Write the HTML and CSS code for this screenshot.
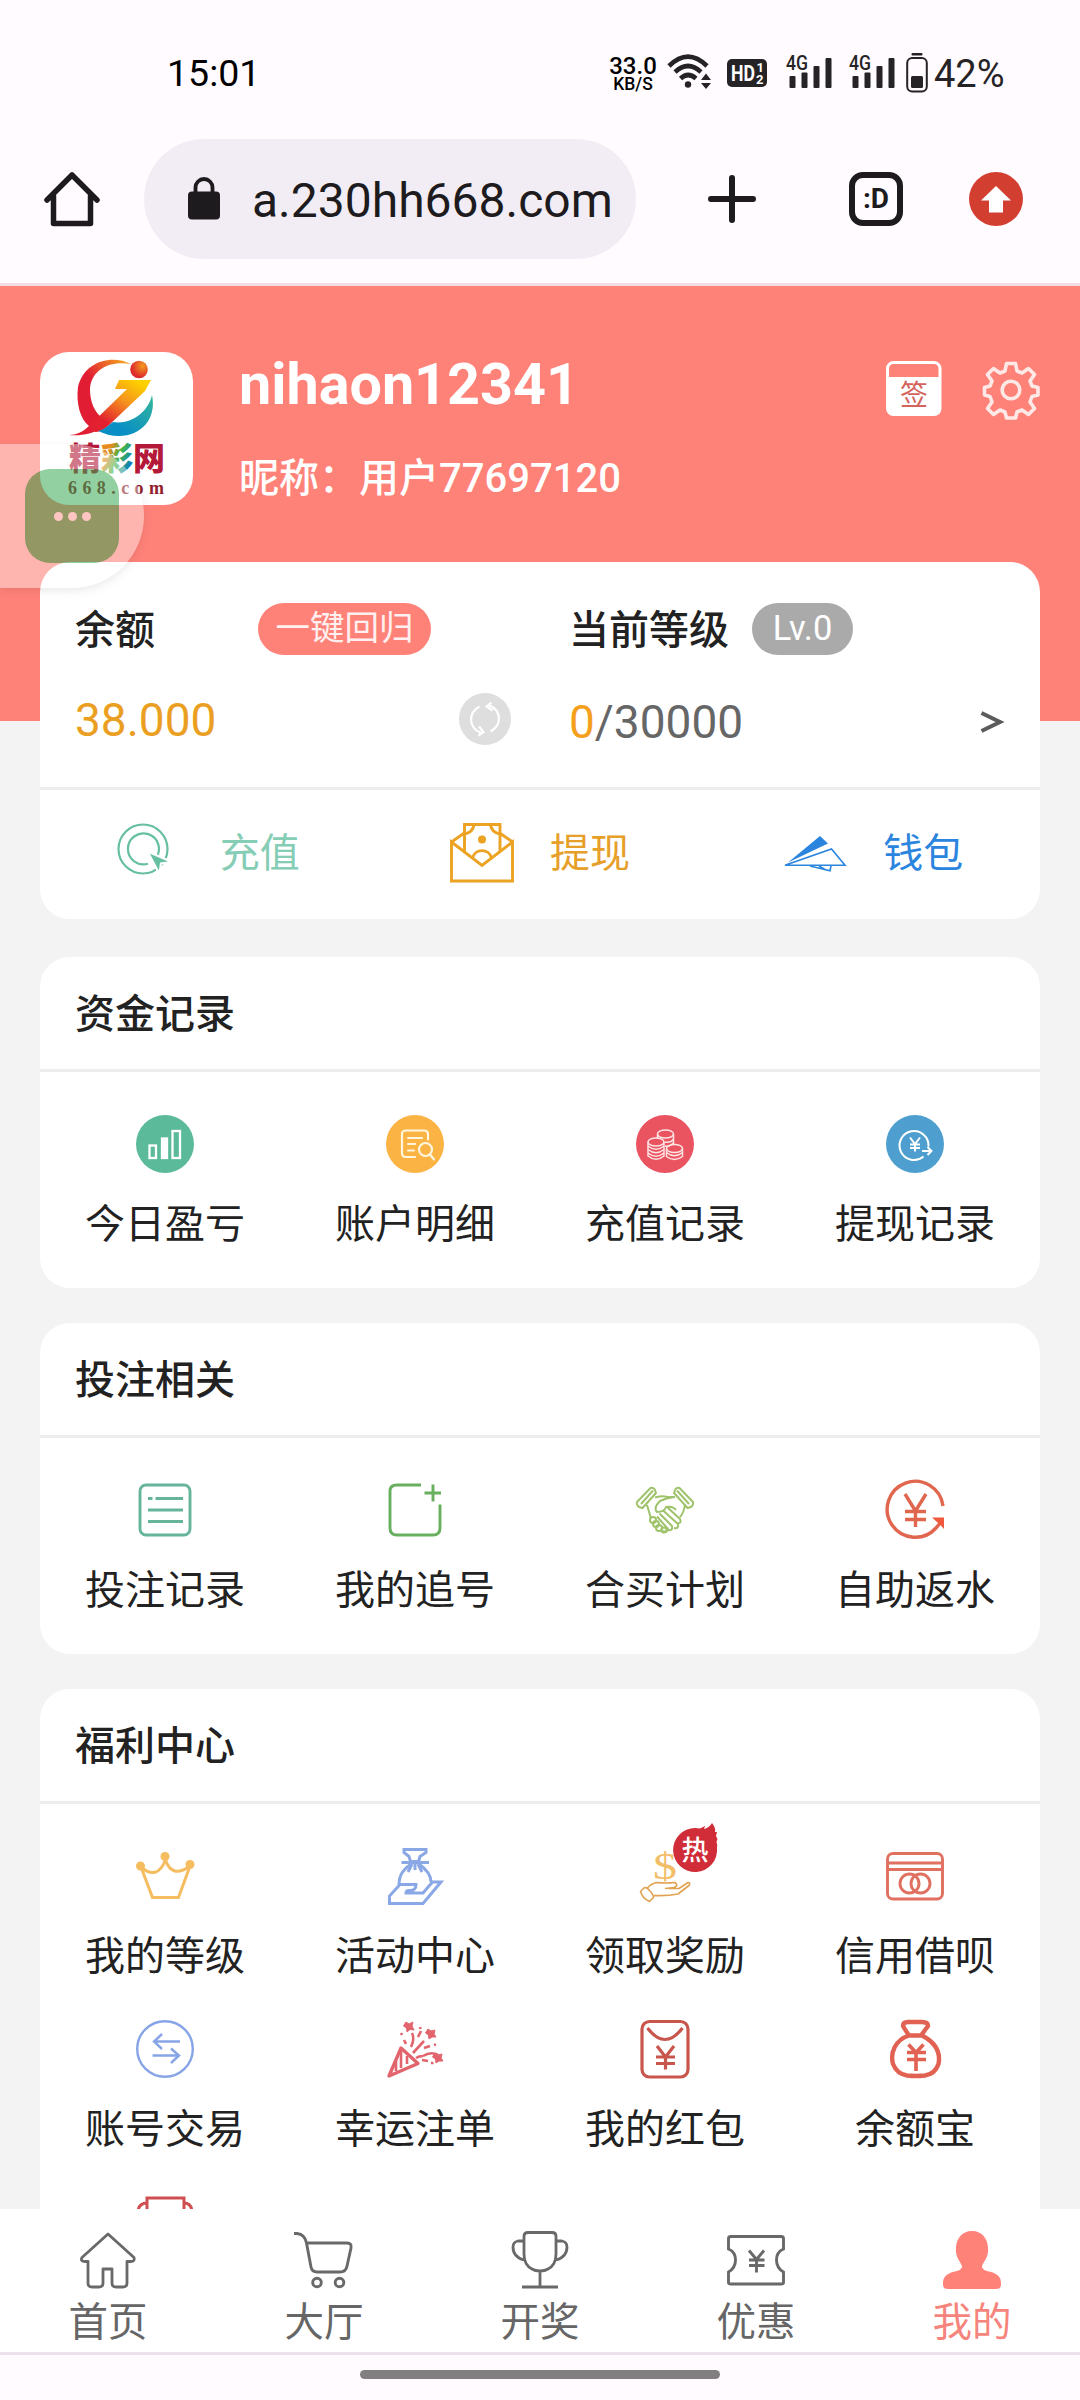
FILE: index.html
```html
<!DOCTYPE html>
<html lang="zh-CN">
<head>
<meta charset="utf-8">
<title>我的</title>
<link rel="stylesheet" href="styles.css">
</head>
<body>
<div class="screen">
  <div class="status">
    <span class="clock">15:01</span>
    <div class="status-right">
      <div class="speed"><span class="speed-num">33.0</span><span class="speed-unit">KB/S</span></div>
      <svg class="wifi" width="46" height="36" viewBox="0 0 46 36" fill="none" stroke="#252325" stroke-width="4.600">
        <path d="M2 12Q21 -7 40 12M8 18Q21 6 34 18M13.500 24.500Q21 17.500 29 24.500"/>
        <circle cx="21" cy="30.500" r="3.200" fill="#252325" stroke="none"/>
        <path d="M34 26l5-6.500 5 6.500zM34 29l5 6 5-6z" fill="#252325" stroke="none"/>
      </svg>
      <svg class="hd" width="40" height="28" viewBox="0 0 40 28">
        <rect width="40" height="28" rx="5" fill="#252325"/>
        <text x="4" y="21.500" class="hd-text" textLength="24" lengthAdjust="spacingAndGlyphs">HD</text>
        <text x="29.500" y="12.500" class="hd-num">1</text>
        <text x="29" y="25" class="hd-num">2</text>
      </svg>
      <svg class="signal" width="46" height="34" viewBox="0 0 46 34" fill="#252325">
        <text x="0" y="15" class="net" textLength="22" lengthAdjust="spacingAndGlyphs">4G</text>
        <rect x="3.500" y="21" width="6" height="12" rx="1"/><rect x="15.500" y="17.500" width="6" height="15.500" rx="1"/><rect x="27.500" y="11" width="6" height="22" rx="1"/><rect x="39.500" y="3" width="6" height="30" rx="1"/>
      </svg>
      <svg class="signal" width="46" height="34" viewBox="0 0 46 34" fill="#252325">
        <text x="0" y="15" class="net" textLength="22" lengthAdjust="spacingAndGlyphs">4G</text>
        <rect x="3.500" y="21" width="6" height="12" rx="1"/><rect x="15.500" y="17.500" width="6" height="15.500" rx="1"/><rect x="27.500" y="11" width="6" height="22" rx="1"/><rect x="39.500" y="3" width="6" height="30" rx="1"/>
      </svg>
      <svg class="battery" width="22" height="40" viewBox="0 0 22 40">
        <rect x="5.500" y="0" width="11" height="2.500" rx="1" fill="#252325"/>
        <rect x="1.200" y="5" width="19.600" height="33.500" rx="5" fill="none" stroke="#252325" stroke-width="2"/>
        <rect x="5" y="23" width="12" height="12" rx="1.500" fill="#252325"/>
      </svg>
      <span class="percent">42%</span>
    </div>
  </div>
  <div class="toolbar">
    <svg class="home" width="58" height="58" viewBox="0 0 58 58" fill="none" stroke="#1d1b1e" stroke-width="5.500" stroke-linejoin="round" stroke-linecap="round"><path d="M4 30L29 5l25 25M10.500 26v27.500h37V26"/></svg>
    <div class="address">
      <svg width="34" height="43" viewBox="0 0 34 43"><rect x="1" y="14.500" width="32" height="28" rx="4" fill="#1d1b1e"/><path d="M8.500 17v-6.500a8.500 8.500 0 0 1 17 0V17" fill="none" stroke="#1d1b1e" stroke-width="3.800"/></svg>
      <span class="url">a.230hh668.com</span>
    </div>
    <svg class="plus" width="48" height="48" viewBox="0 0 48 48" stroke="#1d1b1e" stroke-width="6" stroke-linecap="round"><path d="M24 3v42M3 24h42"/></svg>
    <span class="tabs">:D</span>
    <svg class="update" width="54" height="54" viewBox="0 0 54 54"><circle cx="27" cy="27" r="27" fill="#d23f31"/><path d="M27 14L12 28.500h8V40.500h14V28.500h8z" fill="#fff"/></svg>
  </div>

  <div class="page">
    <header class="profile">
      <svg class="avatar" width="153" height="153" viewBox="0 0 153 153">
        <defs>
          <linearGradient id="swoosh" x1="0" y1="1" x2="1" y2="0"><stop offset=".55" stop-color="#e11d34"/><stop offset="1" stop-color="#f7b41a"/></linearGradient>
          <linearGradient id="seven" x1="0" y1="1" x2=".75" y2="0"><stop offset=".25" stop-color="#e2202f"/><stop offset=".65" stop-color="#f5921e"/><stop offset="1" stop-color="#fdd000"/></linearGradient>
          <linearGradient id="wave" x1="0" y1="1" x2="1" y2="0"><stop offset=".3" stop-color="#0a8fc4"/><stop offset="1" stop-color="#35b79a"/></linearGradient>
          <radialGradient id="ball" cx=".7" cy=".3" r=".8"><stop offset="0" stop-color="#f39a1e"/><stop offset=".8" stop-color="#dd2a2c"/></radialGradient>
          <linearGradient id="cai" x1="0" y1="0" x2="1" y2=".5"><stop offset=".3" stop-color="#e78b1e"/><stop offset=".62" stop-color="#45b649"/><stop offset="1" stop-color="#0c7fc0"/></linearGradient>
        </defs>
        <rect width="153" height="153" fill="#fff"/>
        <path d="M91 12C72 2 44 9 38 35c-2 16 2 32 11 39-6 6-13 9-20 9 12 1 24-1 32-7l3-9C54 61 50 49 50 37 51 19 68 8 91 12z" fill="url(#swoosh)"/>
        <path d="M79 28h32l-6 11L68 74c-5 4-9 6-13 6L49 74l38-37H75z" fill="url(#seven)"/>
        <path d="M58 79c8-2 10-6 15-9 17 3 35-9 39-27 5 24-11 41-33 41-8 0-14-2-21-5z" fill="url(#wave)"/>
        <circle cx="99" cy="17.500" r="8.800" fill="url(#ball)"/>
        <text x="29" y="118" class="logo-cn" fill="#b5193a">精</text><text x="61" y="118" class="logo-cn" fill="url(#cai)">彩</text><text x="93" y="118" class="logo-cn" fill="#b5193a">网</text>
        <text x="28" y="141.500" class="logo-en" textLength="96">668.com</text>
      </svg>
      <div class="who">
        <div class="name">nihaon12341</div>
        <div class="nick">昵称：用户77697120</div>
      </div>
      <div class="tools">
        <svg width="56" height="56" viewBox="0 0 56 56"><rect x="1.500" y="1.500" width="52.500" height="52" rx="6" fill="none" stroke="#fff" stroke-width="3"/><path d="M1 16h54v32q0 6-6 6H7q-6 0-6-6z" fill="#fff"/><text x="14" y="44" class="sign">签</text></svg>
        <svg width="58" height="58" viewBox="0 0 58 58" fill="none" stroke="#ffe9e7" stroke-width="3.600" stroke-linejoin="round"><circle cx="29" cy="29" r="8.800"/><path d="M24.500 2.500h9l1.500 7.500 5 2 6.500-4.500 6 6-4.500 6.500 2 5 6 1.500v7.500l-6 1.500-2 5.500 4.500 6.500-6 6-6.500-4.500-5 2-1.500 6h-9l-1.500-6-5-2-6.500 4.500-6-6L10 41l-2-5.500L2.500 34v-7.500L8 25l2-5-4.500-6.500 6-6L18 12l5-2z"/></svg>
      </div>
    </header>

    <main class="cards">
      <section class="card">
        <div class="summary">
          <div class="half">
            <div class="line"><span class="caption">余额</span><span class="pill recall">一键回归</span></div>
            <div class="line amounts"><span class="money">38.000</span>
              <svg class="refresh" width="52" height="52" viewBox="0 0 52 52" fill="none" stroke="#fff" stroke-width="2.200"><circle cx="26" cy="26" r="26" fill="#dedede" stroke="none"/><path d="M20.500 13.500C9 20 9 34 22 40M31.500 38.500C43 32 43 18 30 12M32.500 9.500L27.500 13.500l6 4M19.500 42.500l5-3.500-4.500-5.500"/></svg>
            </div>
          </div>
          <div class="half level">
            <div class="line"><span class="caption">当前等级</span><span class="pill lv">Lv.0</span></div>
            <div class="line amounts"><span class="points"><b>0</b>/30000</span>
              <svg class="more" width="24" height="24" viewBox="0 0 24 24" fill="none" stroke="#5c5c5c" stroke-width="4"><path d="M1.500 3L20 12 1.500 21"/></svg>
            </div>
          </div>
        </div>
        <div class="quick">
          <div class="action mint">
            <svg width="70" height="62" viewBox="0 0 70 62" fill="none" stroke="#67bfa2" stroke-width="2.200"><circle cx="29" cy="27" r="24.500"/><path d="M42 36A15.500 15.500 0 1 0 34 41.700"/><path d="M33.500 29.500L58 40l-11 1.500L45.500 52z" fill="#67bfa2" stroke="#fff"/></svg>
            <span>充值</span>
          </div>
          <div class="action amber">
            <svg width="64" height="62" viewBox="1 0 64 62" fill="none" stroke="#eca223" stroke-width="2.900"><path d="M2.500 20v39h61V20L33 43.500z"/><path d="M2.500 20L16 10.500M63.500 20L50 10.500M15.500 29V2.500h35.500V29M25 2.500q-1 8-9.500 9.500M41.500 2.500q1 8 9.500 9.500M23.500 36a9.800 9.800 0 0 1 19 0"/><circle cx="33" cy="17.500" r="4" fill="#eca223" stroke="none"/></svg>
            <span>提现</span>
          </div>
          <div class="action azure">
            <svg width="64" height="40" viewBox="0 0 64 40" fill="none" stroke="#2b85df" stroke-width="1.600"><path d="M37 3l8 7.500L5 29.500z" fill="#2b85df" stroke="none"/><path d="M2 32.300L48.500 16 62 32.300zM27 33l20 4.700 1-4.700M36 33l6 3.500"/></svg>
            <span>钱包</span>
          </div>
        </div>
      </section>

      <section class="card">
        <h2>资金记录</h2>
        <div class="grid">
          <div class="item"><svg class="ico" viewBox="0 0 58 58"><circle cx="29" cy="29" r="29" fill="#5bba99"/><g fill="none" stroke="#fff" stroke-width="2.300"><rect x="13.500" y="30.500" width="6.500" height="12.500"/><rect x="26" y="23.500" width="5" height="19.500" fill="#fff"/><rect x="36.500" y="16" width="7.500" height="27"/></g></svg><span>今日盈亏</span></div>
          <div class="item"><svg class="ico" viewBox="0 0 58 58"><circle cx="29" cy="29" r="29" fill="#fbb343"/><g fill="none" stroke="#fff6df" stroke-width="2.200" stroke-linecap="round"><path d="M29 42H20q-4 0-4-4V19q0-3.500 4-3.500h18q4 0 4 4v5M22 23h14M22 29h7M22 35.500h6"/><circle cx="39.500" cy="34.500" r="6.500"/><path d="M44 39.500l4 5"/></g></svg><span>账户明细</span></div>
          <div class="item"><svg class="ico" viewBox="0 0 58 58"><circle cx="29" cy="29" r="29" fill="#e95460"/><g fill="none" stroke="#ffe4e4" stroke-width="1.500"><ellipse cx="29.500" cy="19" rx="8" ry="4"/><path d="M21.500 19v5M37.500 19v11M29 27q6 1 8.500-3M29 31q5 1 8.500-3"/><ellipse cx="20" cy="27" rx="8" ry="4"/><path d="M12 27v14q8 6.500 16 0V27M12 31q8 6.500 16 0M12 34.500q8 6.500 16 0M12 38q8 6.500 16 0"/><ellipse cx="38.500" cy="33.500" rx="8" ry="4"/><path d="M30.500 33.500v8q8 6 16 0v-8M30.500 37.500q8 6.500 16 0"/></g></svg><span>充值记录</span></div>
          <div class="item"><svg class="ico" viewBox="0 0 58 58"><circle cx="29" cy="29" r="29" fill="#4e9fcf"/><g fill="none" stroke="#fff" stroke-width="2"><path d="M37.500 41.500A14.500 14.500 0 1 1 42.500 31.500M24 22.500l5 6.500 5-6.500M29 29v7.500M24 29.500h10M24 33h10M36 36h9M41.500 32l4 4-4 4"/></g></svg><span>提现记录</span></div>
        </div>
      </section>

      <section class="card">
        <h2>投注相关</h2>
        <div class="grid">
          <div class="item"><svg class="ico" viewBox="0 0 58 58" fill="none" stroke="#67b49d" stroke-width="2.900"><rect x="4" y="4" width="50" height="50" rx="6"/><path d="M12 17.500h4.500M19.500 17.500H47M12 29h35M12 40.500h35"/></svg><span>投注记录</span></div>
          <div class="item"><svg class="ico" viewBox="0 0 58 58" fill="none" stroke="#68af60" stroke-width="2.900"><path d="M35 4H11Q4 4 4 10v37q0 7 7 7h36q7 0 7-7V23.500M47 3.500v17M38.500 12H55"/></svg><span>我的追号</span></div>
          <div class="item"><svg class="ico" viewBox="0 0 58 58" fill="none" stroke="#9fc36a" stroke-width="2" stroke-linejoin="round"><path d="M1 21L14.500 7q2-1 4 1l1.500 4L6.500 27Q0 26 1 21zM5 23L17 9.500M57 21L43.500 7q-2-1-4 1L38 12l13.500 15Q58 26 57 21zM53 23L41 9.500M19 16.500q8-2 12-.5h8M11 24l4 13.500M49 23q-1 9-5 13M38 16q-8 1-14 4c-4 4-6 8-3 11 5 0 8-2 9-5 5-1 8 0 10 3M31 26l13 12q2 5-3 4M26.500 29L42 43q1 5-4 4M23.500 32.500L36 45q1 5-4 4M21 35.500L32 48q-1 4-5 2"/><circle cx="17" cy="39" r="3"/><circle cx="20" cy="43" r="3"/><circle cx="23" cy="47" r="3"/><circle cx="28" cy="49" r="2.500"/></svg><span>合买计划</span></div>
          <div class="item"><svg class="ico" viewBox="0 0 58 58" fill="none" stroke="#e1664e" stroke-width="3.400"><path d="M57 25A28 28 0 1 0 50 47L56 40M19 13l10.500 17L40 13M29.500 28v18M19 30.500h21M19 38.500h21"/><path d="M46 36.500h12V48L54 43.500 51 41z" fill="#f0593b" stroke="none"/></svg><span>自助返水</span></div>
        </div>
      </section>

      <section class="card welfare">
        <h2>福利中心</h2>
        <div class="grid">
          <div class="item"><svg class="ico" viewBox="0 0 58 58" fill="none" stroke="#f6bd60" stroke-width="3"><path d="M5 20l11.500 30.500h26L54 19Q36 32 29.500 13 21 34 5 20z"/><g fill="#f6bd60" stroke="none"><circle cx="4.500" cy="19" r="4.500"/><circle cx="29" cy="9.500" r="4.500"/><circle cx="54" cy="17.500" r="4.500"/></g></svg><span>我的等级</span></div>
          <div class="item"><svg class="ico" viewBox="0 0 58 58" fill="none" stroke="#8aa8e6" stroke-width="3"><path d="M18 2.500h22v3l-6 4-1.500 5h-8L23 9.500l-5-4zM15.500 15.500H43M25 17c-7 5-12 10-12 21M33 17c7 5 12 10 12 18M29 16v7M26 17l-4 8M32 17l4 8"/><path d="M3.500 56.500V49L14 37.500h16q0 6-6 6-4-.5-4 2.500h17l9.500-11H55L37 56.500z"/></svg><span>活动中心</span></div>
          <div class="item"><div class="ico-wrap"><svg class="ico" viewBox="0 0 58 58"><text x="17" y="32" class="dollar" textLength="24" lengthAdjust="spacingAndGlyphs">$</text><path d="M4.500 44.500l4-4q3 0 5 3 4 4 4 7l-4 4q-7-3-9-10zM11 41.500q4-5 10-6 8 1 18 0 4 3-1 5l-9 1M33 41.500h10l9-6q3 0 1 3L42 47q-10 2-24 1.500" fill="none" stroke="#e2a350" stroke-width="1.600" stroke-linejoin="round"/></svg>
            <svg class="hot" width="46" height="50" viewBox="0 0 46 50"><path d="M23 5Q26 5 28 5.500L33 3l-1 3q5-1 8-6 4 5 3 9l2 0-1 4 1.500 3-1 3q1 2 .5 6A22 22 0 1 1 23 5z" fill="#d02d39"/><text x="9.500" y="37" class="hot-text">热</text></svg></div><span>领取奖励</span></div>
          <div class="item"><svg class="ico" viewBox="0 0 58 58" fill="none" stroke="#e07060" stroke-width="2.900"><rect x="1.500" y="6.500" width="55" height="45.500" rx="5.500"/><path d="M1.500 16h55M1.500 22.500h55"/><circle cx="23.500" cy="36.500" r="9.500"/><circle cx="34.500" cy="36.500" r="9.500"/></svg><span>信用借呗</span></div>
          <div class="item"><svg class="ico" viewBox="0 0 58 58" fill="none" stroke="#87a5e6" stroke-width="2.400"><circle cx="29" cy="29" r="27.800"/><path d="M44 21.500H18M26 14l-8 7.500 8 7.500M16.500 35.500H43M35 28.500l8 7-8 7.500"/></svg><span>账号交易</span></div>
          <div class="item"><svg class="ico" viewBox="0 0 58 58" fill="none" stroke="#e2656d" stroke-width="2.600" stroke-linejoin="round"><path d="M15 28L3 56l29-12.500z" stroke-width="3.400"/><path d="M15 31v17M21 36v8M10 41v10" /><path d="M26 13q3 6-1 14M38 21L27 33M35 11l-3 6M37 36q-4 0-7 2M37 36q8-5 15-1M38 28l6-2M36 40l6 1M15 13l1 2M18 20l2 4M34 7l.5 2M48 25l2-.5M45 43h2.500"/><path d="M20 2l3 2 4-2-1 4 2 4-4-.5-3 2.500-.500-4-3-2zM42 9l3 2 4-1-1 4 2 3-4 0-3 2-.500-4-3-2zM49 33l3 2 4-1-1 4 2 3-4 0-3 2-.500-4-3-2z" fill="#e2656d" stroke="#e2656d" stroke-width="1"/></svg><span>幸运注单</span></div>
          <div class="item"><svg class="ico" viewBox="0 0 58 58" fill="none" stroke="#c9564d" stroke-width="3.200"><rect x="6" y="1.500" width="46" height="55.500" rx="7.500"/><path d="M11.500 8Q29 31 46.500 8M21 26l8.500 11 8.500-11M29.500 36v13.500M20 37h19M20 43.500h19"/></svg><span>我的红包</span></div>
          <div class="item"><svg class="ico" viewBox="0 0 58 58" fill="none" stroke="#e16252" stroke-width="4.400"><path d="M23 15.500q-4-6-6-9.500 0-4 5-4h14q6 0 6 4-3 4-7 9.500zM23 15.500C9 20 4 33 7 44q4 10 14 11.500 9 1 18 0Q49 54 52.500 44 56 26 36 15.500z"/><path d="M22.500 24.500l7.500 8 7.500-8M30 31.500V51M21 32.500h19M21 39.500h19" stroke-width="3.600"/></svg><span>余额宝</span></div>
          <div class="item"><svg class="ico" viewBox="0 0 58 58" fill="none" stroke="#cf4f50" stroke-width="3"><path d="M11 5h37v24q0 14-18.500 14T11 29zM11 10Q2 10 2 20q0 8 9 10M48 10q8 0 8 10 0 8-8 10"/></svg></div>
        </div>
      </section>
    </main>
  </div>

  <nav class="tabbar">
    <div class="tab"><svg class="ico" viewBox="0 0 58 58" fill="none" stroke="#696969" stroke-width="2.800" stroke-linejoin="round"><path d="M29 3L3 26.500q-2 4 3 4h3V52q0 4 4 4h7q4 0 4-4V38h9v14q0 4 4 4h7q4 0 4-4V30.500h4q4 0 3-4z"/></svg><span>首页</span></div>
    <div class="tab"><svg class="ico" viewBox="0 0 58 58" fill="none" stroke="#696969" stroke-width="2.900" stroke-linejoin="round"><path d="M-1 2.500h3q8 1 9.500 9.500L16 36q1 5 6 5h23q6 0 7-6l4-18q1-5-4-5H12"/><circle cx="22" cy="51.500" r="4.300"/><circle cx="44.500" cy="51.500" r="4.300"/></svg><span>大厅</span></div>
    <div class="tab"><svg class="ico" viewBox="0 0 58 58" fill="none" stroke="#696969" stroke-width="2.800"><path d="M13 5q0-3.500 4-3.500h24q4 0 4 3.500v18q0 11-8 15-3 2-8 2t-8-2q-8-4-8-15zM13 10H7q-5 1-5 6 0 10 11 13M45 10h6q5 1 5 6 0 10-11 13M29 40v16M11 56h36"/></svg><span>开奖</span></div>
    <div class="tab"><svg class="ico" viewBox="0 0 58 58" fill="none" stroke="#696969" stroke-width="2.900"><path d="M4 5.500h50q2.500 0 2.500 2V18q-7 3-7 11t7 12v10.500q0 1.500-2.500 1.500H4q-2.500 0-2.500-1.500V41q7-4 7-12t-7-11V7.500q0-2 2.500-2zM22 19.500l7.500 9 7.500-9M29.500 28v13.500M22 29h15.500M22 34.500h15.500"/></svg><span>优惠</span></div>
    <div class="tab active"><svg class="ico" viewBox="0 0 58 58"><path d="M29 0c11 0 17 9 16 21-1 7-4 9-6 14 0 5 7 5 12 7 6 3 7 6 7 11 0 4-2 5-5 5H5c-3 0-5-1-5-5 0-5 1-8 7-11 5-2 12-2 12-7-2-5-5-7-6-14C12 9 18 0 29 0z" fill="#ff8279"/></svg><span>我的</span></div>
  </nav>
  <div class="gesture"><i></i></div>

  <div class="float"><div class="chat"><i></i><i></i><i></i></div></div>
</div>
</body>
</html>
```
FILE: styles.css
```css
* { box-sizing: border-box; }
body { margin: 0; font-family: Roboto, "Noto Sans CJK SC", sans-serif; color: #222; }
svg { display: block; flex: none; overflow: visible; }
.screen { position: relative; width: 1080px; height: 2400px; overflow: hidden; display: flex; flex-direction: column; background: #fffbff; }

.status { height: 139px; flex: none; display: flex; justify-content: space-between; padding: 45px 73px 0 167px; }
.clock { font-size: 37.500px; line-height: 57px; color: #000; }
.status-right { display: flex; align-items: center; height: 56px; }
.speed { display: flex; flex-direction: column; width: 52px; align-items: center; color: #000; font-weight: 500; margin-right: 8px; }
.speed-num { font-size: 24px; line-height: 20px; height: 20px; }
.speed-unit { font-size: 17.500px; line-height: 17px; height: 15px; }
.wifi { margin: -2px 14px 0 0; }
.hd { margin-right: 19px; }
.hd-text { font-size: 22px; font-weight: 700; fill: #fff; }
.hd-num { font-size: 13px; font-weight: 700; fill: #fff; }
.net { font-size: 20px; font-weight: 500; }
.signal { margin: -2px 17px 0 0; }
.signal + .battery { margin-left: -6px; }
.battery { margin-right: 6px; }
.percent { font-size: 38px; color: #252325; width: 73px; padding-top: 2px; }

.toolbar { height: 147px; flex: none; display: flex; align-items: flex-start; border-bottom: 3px solid #f2dce6; padding: 0 57px 0 43px; }
.home, .plus, .tabs, .update { margin-top: 33px; }
.home { margin-top: 31px; }
.address { display: flex; align-items: center; width: 492px; height: 120px; margin-left: 43px; border-radius: 60px; background: #f2edf4; padding-left: 43px; }
.address svg { margin-top: -2px; }
.url { margin-left: 31px; padding-top: 2px; font-size: 48px; color: #1d1b1e; }
.plus { margin: 36px 93px 0 72px; }
.tabs { width: 54px; height: 54px; border: 6px solid #1d1b1e; border-radius: 14px; text-align: center; font-size: 28px; font-weight: 700; line-height: 41px; color: #1d1b1e; margin-right: 66px; }

.page { height: 1923px; flex: none; overflow: hidden; background: linear-gradient(#ff8279 435px, #f3f3f3 435px); }
.profile { height: 434px; background: #ff8279; display: flex; padding: 66px 40px 0; }
.avatar { border-radius: 29px; overflow: hidden; }
.logo-cn { font-size: 32px; font-weight: 900; }
.logo-en { font: bold 18px "Liberation Serif", serif; fill: #8f1d2c; }
.who { margin-left: 46px; flex: 1; color: #fff; }
.name { font-size: 57.500px; font-weight: 700; line-height: 66px; }
.nick { font-size: 40px; font-weight: 500; line-height: 60px; margin-top: 31px; }
.tools { display: flex; gap: 40px; margin-top: 9px; }
.sign { font-size: 28px; fill: #d4635c; }

.cards { margin: -158px 40px 0; }
.card { background: #fff; border-radius: 30px; margin-bottom: 35px; }
.card:first-child { margin-bottom: 38px; height: 357px; }
.summary { display: flex; height: 228px; border-bottom: 3px solid #ededed; padding: 41px 36px 0 35px; }
.half { width: 436px; }
.level { flex: 1; padding-left: 58px; }
.line { display: flex; align-items: center; height: 52px; }
.amounts { justify-content: space-between; margin-top: 38px; }
.caption { font-size: 40px; font-weight: 500; margin-top: -5px; }
.pill { height: 52px; border-radius: 26px; font-size: 34.500px; line-height: 50px; text-align: center; }
.recall { width: 173px; margin-left: 103px; background: #ff8279; color: #ffefee; }
.lv { width: 101px; margin-left: 23px; background: #aaa; color: #fff; }
.money { font-size: 46px; color: #eb9f22; padding-top: 2px; }
.points { font-size: 46px; color: #666; padding-top: 6px; }
.points b { font-weight: 400; color: #f5a01c; }
.more { margin-top: 6px; }
.quick { display: grid; grid-template-columns: 1fr 1fr 1fr; height: 129px; padding-top: 31px; }
.action { display: flex; height: 64px; align-items: center; justify-content: center; gap: 36px; font-size: 40px; }
.action span { margin-top: -6px; }
.mint { color: #85cdb5; }
.amber { color: #e6a029; }
.azure { color: #2b85df; }

h2 { margin: 0; height: 115px; border-bottom: 3px solid #ededed; padding-left: 35px; font-size: 40px; font-weight: 500; line-height: 116px; }
.grid { display: grid; grid-template-columns: repeat(4, 1fr); row-gap: 36px; padding: 43px 0 36px; }
.item { display: flex; flex-direction: column; align-items: center; height: 137px; }
.item span { margin-top: 24px; font-size: 40px; line-height: 56px; }
.ico { width: 58px; height: 58px; }
.ico-wrap { position: relative; }
.hot { position: absolute; left: 36px; top: -24px; }
.hot-text { font-size: 27px; fill: #fff; font-weight: 500; }
.dollar { font: 38px "Liberation Serif", serif; fill: #f3bd68; }

.tabbar { height: 146px; flex: none; display: grid; grid-template-columns: repeat(5, 1fr); background: #fff; border-bottom: 3px solid #ebe1ea; padding-top: 22px; }
.tab { display: flex; flex-direction: column; align-items: center; color: #666; }
.tab span { font-size: 39.500px; line-height: 56px; margin-top: 6px; }
.active span { color: #f5857c; }
.gesture { flex: 1; padding: 15px 360px 0; }
.gesture i { display: block; height: 9px; border-radius: 5px; background: #827f81; }

.float { position: absolute; left: 0; top: 444px; width: 144px; height: 144px; padding: 25px; border-radius: 0 72px 72px 0; background: rgba(255, 255, 255, .75); box-shadow: 0 3px 8px rgba(0, 0, 0, .15); opacity: .54; }
.chat { width: 94px; height: 94px; border-radius: 25px; background: #37a952; display: flex; justify-content: center; gap: 5px; padding-top: 43px; }
.chat i { width: 9px; height: 9px; border-radius: 50%; background: #fff; }
```
